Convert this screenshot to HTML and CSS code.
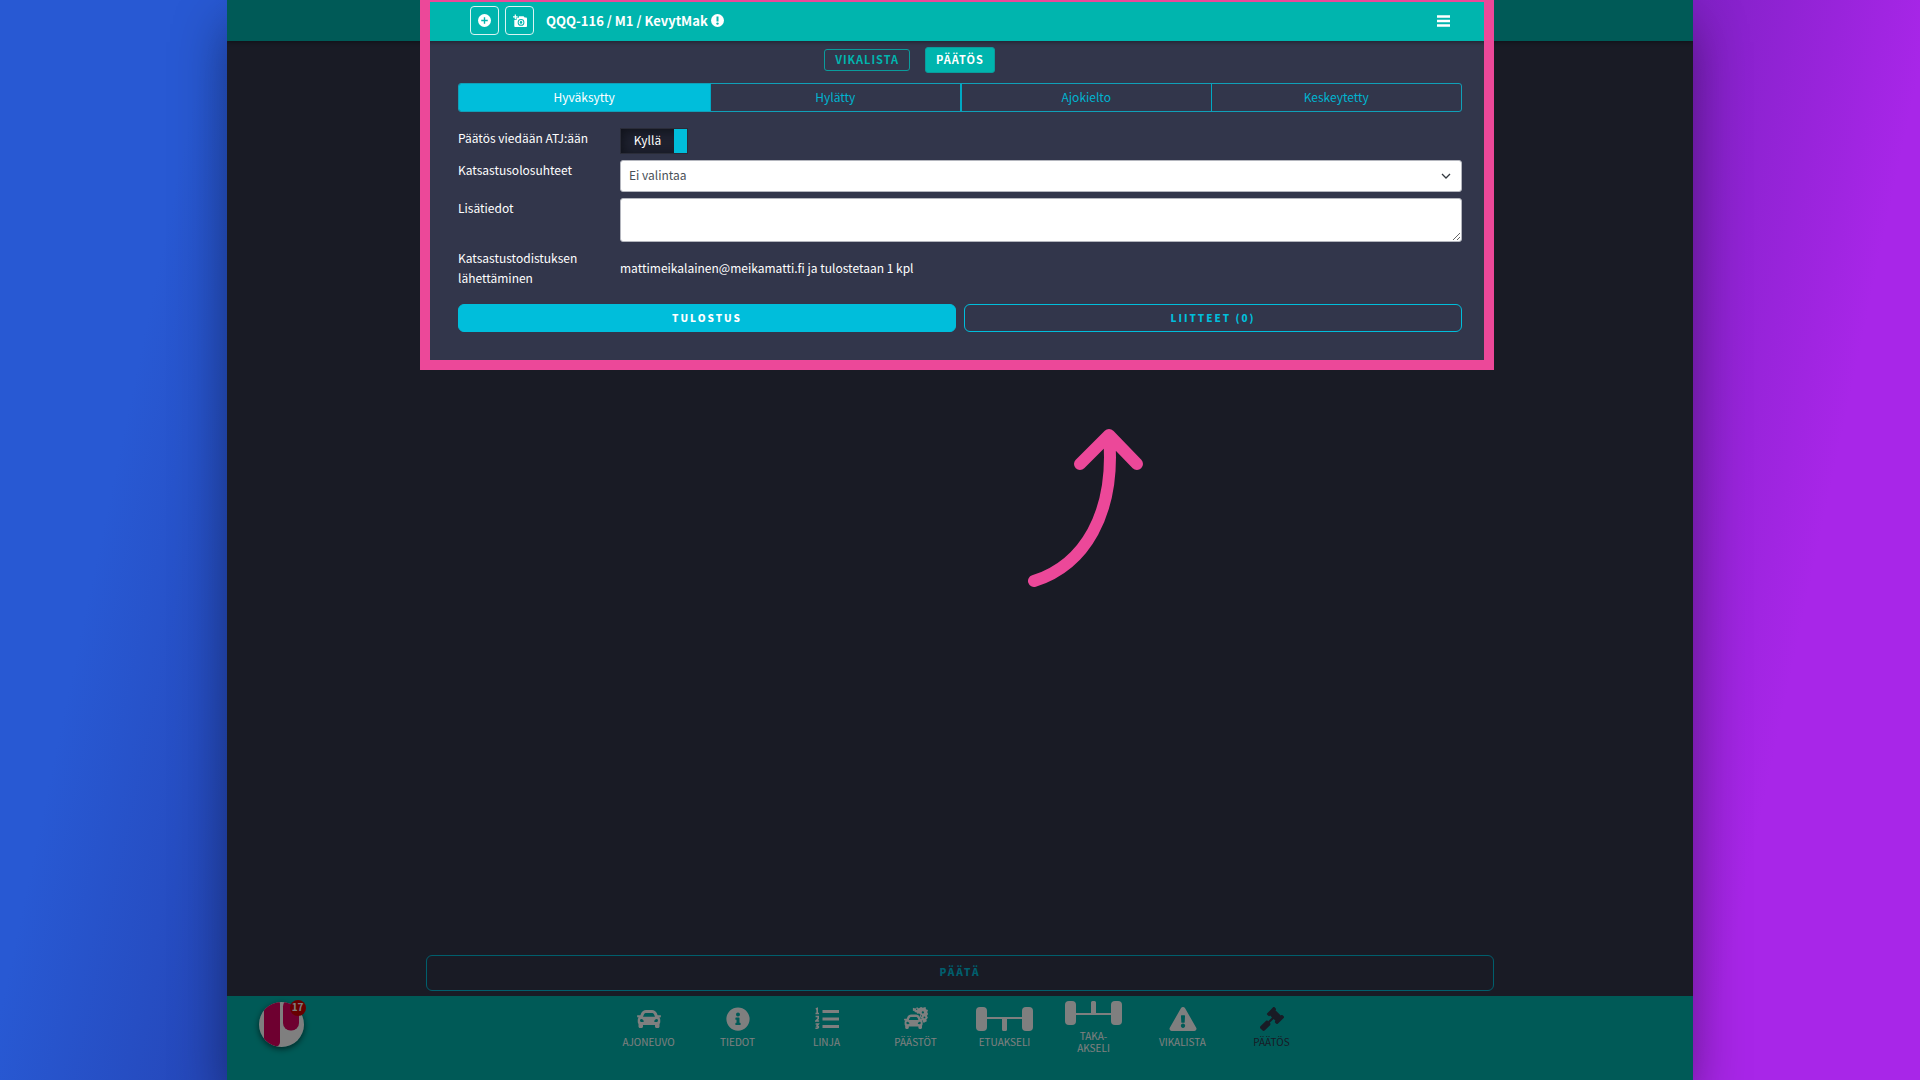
FILE: index.html
```html
<!DOCTYPE html>
<html lang="fi">
<head>
<meta charset="utf-8">
<title>QQQ-116 – Päätös</title>
<link rel="stylesheet" href="styles.css">
</head>
<body>
<div class="window">
  <header class="topbar">
    <div class="container topbar-row">
      <button class="icon-button" type="button" aria-label="Lisää">
        <svg width="13" height="13" viewBox="0 0 14 14"><circle cx="7" cy="7" r="7" fill="#fff"/><path d="M7 3.5v7M3.5 7h7" stroke="#00b5ae" stroke-width="1.5"/></svg>
      </button>
      <button class="icon-button" type="button" aria-label="Ota kuva">
        <svg width="14" height="14" viewBox="0 0 15 14"><path d="M2.500 0v5M0 2.500h5" stroke="#fff" stroke-width="1.300"/><path fill="#fff" fill-rule="evenodd" d="M6.300 2.600V2h5l1.200 1.300h1.300c.7 0 1.200.5 1.200 1.200v7.800c0 .7-.5 1.200-1.200 1.200H2.600c-.7 0-1.200-.5-1.200-1.200V5.900h2.400V3.600h2.500zM8.600 4.900a3.600 3.600 0 1 0 0 7.200 3.600 3.600 0 0 0 0-7.200zm0 1a2.600 2.600 0 1 1 0 5.200 2.600 2.600 0 0 1 0-5.200zm0 1.200a1.400 1.400 0 1 0 0 2.800 1.400 1.400 0 0 0 0-2.800z"/></svg>
      </button>
      <h1 class="vehicle">QQQ-116 / M1 / KevytMak
        <svg width="13" height="13" viewBox="0 0 13 13"><circle cx="6.500" cy="6.500" r="6.500" fill="#fff"/><path d="M6.500 2.500v5" stroke="#00b5ae" stroke-width="2"/><circle cx="6.500" cy="9.600" r="1.200" fill="#00b5ae"/></svg>
      </h1>
      <button class="menu-button" type="button" aria-label="Valikko">
        <svg width="13" height="12" viewBox="0 0 13 12"><path d="M0 1.500h13M0 6h13M0 10.500h13" stroke="#fff" stroke-width="2.400"/></svg>
      </button>
    </div>
  </header>

  <main class="container content">
    <div class="decision">
      <nav class="views">
        <button class="view" type="button">VIKALISTA</button>
        <button class="view view-active" type="button">PÄÄTÖS</button>
      </nav>

      <div class="results">
        <button class="result result-active" type="button">Hyväksytty</button>
        <button class="result" type="button">Hylätty</button>
        <button class="result result-heavy" type="button">Ajokielto</button>
        <button class="result" type="button">Keskeytetty</button>
      </div>

      <form class="form">
        <label class="label" for="atj">Päätös viedään ATJ:ään</label>
        <div class="toggle">
          <input class="toggle-input" type="checkbox" id="atj" checked>
          <span class="toggle-text">Kyllä</span>
          <span class="toggle-knob"></span>
        </div>

        <label class="label" for="conditions">Katsastusolosuhteet</label>
        <div class="select-wrap">
          <select class="field select" id="conditions"><option>Ei valintaa</option></select>
          <svg class="chevron" width="10" height="6" viewBox="0 0 10 6"><path d="M1 1l4 4 4-4" fill="none" stroke="#343a40" stroke-width="1.300"/></svg>
        </div>

        <label class="label" for="notes">Lisätiedot</label>
        <textarea class="field notes" id="notes"></textarea>

        <span class="label">Katsastustodistuksen lähettäminen</span>
        <p class="delivery">mattimeikalainen@meikamatti.fi ja tulostetaan 1 kpl</p>
      </form>

      <div class="actions">
        <button class="action action-primary" type="button">TULOSTUS</button>
        <button class="action" type="button">LIITTEET (0)</button>
      </div>
    </div>
    <button class="action finish" type="button">PÄÄTÄ</button>
  </main>

  <footer class="bottombar">
    <a class="logo" href="#" aria-label="Ilmoitukset">
      <svg class="logo-disc" width="45" height="45" viewBox="0 0 45 45"><defs><clipPath id="disc"><circle cx="22.500" cy="22.500" r="22.500"/></clipPath></defs><g clip-path="url(#disc)"><path fill="#fff" d="M0 0h45v45H0z"/><rect x="5" y="-3" width="16" height="48" rx="5" fill="#dc0060"/><rect x="24" y="-3" width="16" height="31.500" rx="7.500" fill="#dc0060"/></g></svg>
      <span class="badge">17</span>
    </a>
    <nav class="tabs">
      <a class="tab" href="#">
        <svg width="24" height="24" viewBox="0 0 512 512"><path id="car" fill="currentColor" d="M499.990 176h-59.870l-16.640-41.600C406.380 91.630 365.570 64 319.500 64h-127c-46.060 0-86.880 27.630-103.990 70.400L71.870 176H12.010C4.200 176-1.530 183.340.37 190.910l6 24C7.700 220.250 12.500 224 18.010 224h20.070C24.650 235.730 16 252.780 16 272v48c0 16.120 6.160 30.670 16 41.930V416c0 17.670 14.330 32 32 32h32c17.670 0 32-14.330 32-32v-32h256v32c0 17.670 14.330 32 32 32h32c17.670 0 32-14.330 32-32v-54.070c9.840-11.250 16-25.800 16-41.930v-48c0-19.220-8.650-36.270-22.070-48H494c5.510 0 10.310-3.750 11.640-9.090l6-24c1.890-7.570-3.840-14.910-11.650-14.910zm-352.060-17.830c7.290-18.220 24.940-30.170 44.570-30.170h127c19.630 0 37.280 11.950 44.570 30.170L384 208H128l19.930-49.830zM96 319.800c-19.200 0-32-12.760-32-31.900S76.800 256 96 256s48 28.710 48 47.850-28.800 15.950-48 15.950zm320 0c-19.200 0-48 3.190-48-15.950S396.800 256 416 256s32 12.760 32 31.900-12.800 31.900-32 31.900z"/></svg>
        AJONEUVO
      </a>
      <a class="tab" href="#">
        <svg width="24" height="24" viewBox="0 0 512 512"><path fill="currentColor" d="M256 8C119.040 8 8 119.080 8 256c0 137 111.040 248 248 248s248-111 248-248C504 119.080 392.960 8 256 8zm0 110c23.200 0 42 18.800 42 42s-18.800 42-42 42-42-18.800-42-42 18.800-42 42-42zm56 254c0 6.630-5.370 12-12 12h-88c-6.630 0-12-5.370-12-12v-24c0-6.630 5.370-12 12-12h12v-64h-12c-6.630 0-12-5.370-12-12v-24c0-6.630 5.370-12 12-12h64c6.630 0 12 5.370 12 12v100h12c6.630 0 12 5.370 12 12v24z"/></svg>
        TIEDOT
      </a>
      <a class="tab" href="#">
        <svg width="24" height="24" viewBox="0 0 24 24" fill="none" stroke="currentColor"><path d="M7.500 4.500H24M7.500 12H24M7.500 19.500H24" stroke-width="3"/><path d="M.8 2l1.400-.5V6M.5 6.500h3.500M.6 9.500h2.600v2.200L.9 14h3.200M.6 17h2.700l-1.300 2c2.400 0 1.600 2.800-1.500 2.100" stroke-width="1.600"/></svg>
        LINJA
      </a>
      <a class="tab" href="#">
        <svg width="24" height="24" viewBox="0 0 512 512"><use href="#car" transform="translate(0 110) scale(.8)"/><path fill="currentColor" d="M190 14l50 20 40-30 36 30 46-36 38 20 60-18 8 50 44 14-16 50 20 38-28 32 22 44-34 36 12 42-46 20-18 14-20-26-8-56-36-20-26-42 18-34-30-24-38 6-20-32-30 0-16-32-28 6z"/><g fill="#00b5ae"><circle cx="402" cy="116" r="24"/><circle cx="436" cy="222" r="20"/><circle cx="270" cy="48" r="14"/><circle cx="372" cy="190" r="14"/></g></svg>
        PÄÄSTÖT
      </a>
      <a class="tab" href="#">
        <svg width="57" height="24" viewBox="0 0 57 24" fill="currentColor"><rect width="11" height="24" rx="4"/><rect x="46" width="11" height="24" rx="4"/><path d="M11 10h35v2H31v10.500a1.500 1.500 0 0 1-1.500 1.500h-2a1.500 1.500 0 0 1-1.500-1.500V12H11z"/></svg>
        ETUAKSELI
      </a>
      <a class="tab" href="#">
        <svg width="57" height="24" viewBox="0 0 57 24" fill="currentColor"><rect width="11" height="24" rx="4"/><rect x="46" width="11" height="24" rx="4"/><path d="M11 14h35v-2H31V1.500A1.500 1.500 0 0 0 29.500 0h-2A1.500 1.500 0 0 0 26 1.500V12H11z"/></svg>
        TAKA-<br>AKSELI
      </a>
      <a class="tab" href="#">
        <svg width="28" height="24" viewBox="0 0 576 512"><path fill="currentColor" d="M569.517 440.013C587.975 472.007 564.806 512 527.940 512H48.054c-36.937 0-59.999-40.055-41.577-71.987L246.423 23.985c18.467-32.009 64.720-31.951 83.154 0l239.940 416.028zM288 354c-25.405 0-46 20.595-46 46s20.595 46 46 46 46-20.595 46-46-20.595-46-46-46zm-43.673-165.346l7.418 136c.347 6.364 5.609 11.346 11.982 11.346h48.546c6.373 0 11.635-4.982 11.982-11.346l7.418-136c.375-6.874-5.098-12.654-11.982-12.654h-63.383c-6.884 0-12.356 5.780-11.981 12.654z"/></svg>
        VIKALISTA
      </a>
      <a class="tab tab-active" href="#">
        <svg width="24" height="24" viewBox="0 0 512 512"><path fill="currentColor" d="M504.971 199.362l-22.627-22.627c-9.373-9.373-24.569-9.373-33.941 0l-5.657 5.657L329.608 69.255l5.657-5.657c9.373-9.373 9.373-24.569 0-33.941L312.638 7.029c-9.373-9.373-24.569-9.373-33.941 0L154.246 131.480c-9.373 9.373-9.373 24.569 0 33.941l22.627 22.627c9.373 9.373 24.569 9.373 33.941 0l5.657-5.657 39.598 39.598-81.040 81.040-5.657-5.657c-12.497-12.497-32.758-12.497-45.255 0L9.373 412.118c-12.497 12.497-12.497 32.758 0 45.255l45.255 45.255c12.497 12.497 32.758 12.497 45.255 0l114.745-114.745c12.497-12.497 12.497-32.758 0-45.255l-5.657-5.657 81.040-81.040 39.598 39.598-5.657 5.657c-9.373 9.373-9.373 24.569 0 33.941l22.627 22.627c9.373 9.373 24.569 9.373 33.941 0l124.451-124.451c9.372-9.372 9.372-24.568 0-33.941z"/></svg>
        PÄÄTÖS
      </a>
    </nav>
  </footer>

  <div class="spotlight"></div>
  <svg class="arrow" viewBox="26 26 142 162" fill="none" stroke="#ec4899" stroke-width="12" stroke-linecap="round" stroke-linejoin="round"><path d="M54 181C104 165 136 114 129 36M100 64l29-29 28 29"/></svg>
</div>
</body>
</html>
```
FILE: styles.css
```css
* {
  box-sizing: border-box;
}

body {
  margin: 0;
  background: linear-gradient(102deg, #2859d3 10%, #1c1470 50%, #a826e8 90%);
  color: #fff;
  font-family: "Noto Sans CJK SC", "Open Sans", sans-serif;
  font-size: 12px;
  line-height: 20px;
}

button,
select,
textarea {
  font: inherit;
}

.window {
  position: relative;
  display: flex;
  flex-direction: column;
  width: 76.4%;
  min-height: 100vh;
  margin: 0 auto;
  overflow: hidden;
  background: #32364b;
  box-shadow: 0 24px 50px rgba(0, 0, 0, 0.4);
}

.container {
  width: 100%;
  max-width: 1068px;
  margin: 0 auto;
}

/* Top bar */

.topbar {
  background: #00b5ae;
  box-shadow: 0 1px 4px rgba(0, 0, 0, 0.4);
}

.topbar-row {
  display: flex;
  align-items: center;
  gap: 6px;
  height: 41px;
  padding: 0 44px;
}

.icon-button {
  display: grid;
  place-items: center;
  width: 29px;
  height: 29px;
  padding: 0;
  border: 1px solid #d9f4f3;
  border-radius: 4px;
  background: none;
}

.vehicle {
  display: flex;
  align-items: center;
  gap: 3px;
  margin: 0 0 0 6px;
  font-size: 13px;
  font-weight: 700;
}

.menu-button {
  display: grid;
  margin-left: auto;
  padding: 0;
  border: 0;
  background: none;
}

/* Decision form */

.content {
  display: flex;
  flex: 1;
  flex-direction: column;
  justify-content: space-between;
  padding-bottom: 5px;
}

.decision {
  padding: 6px 32px 0;
}

.views {
  display: flex;
  align-items: center;
  justify-content: center;
  gap: 15px;
  height: 26px;
  padding-right: 101px;
}

.view {
  height: 22px;
  padding: 0 10px 2px;
  border: 1px solid #0a9c9c;
  border-radius: 3px;
  background: none;
  color: #00b5ae;
  font-size: 11px;
  font-weight: 700;
  line-height: 18px;
  letter-spacing: 1px;
}

.view-active {
  height: 26px;
  background: #00b5ae;
  color: #fff;
}

.results {
  display: grid;
  grid-template-columns: repeat(4, 1fr);
  margin-top: 10px;
  overflow: hidden;
  border: 1px solid #10a0b8;
  border-radius: 3px;
}

.result {
  height: 27px;
  padding: 0 0 2px;
  border: 0;
  border-left: 1px solid #00a9c4;
  background: none;
  color: #00b4d0;
}

.result-active {
  border-left: 0;
  background: #00bedb;
  color: #fff;
}

.result-heavy {
  border-left-width: 2px;
}

.form {
  display: grid;
  grid-template-columns: 162px 1fr;
  row-gap: 6px;
  margin-top: 16px;
}

.toggle {
  position: relative;
  display: flex;
  justify-self: start;
  width: 68px;
  height: 26px;
  border: 1px solid #2a2c38;
  background: #1f2230;
  box-shadow: inset 2px 2px 12px #10121a;
}

.toggle-input {
  position: absolute;
  inset: 0;
  width: 100%;
  height: 100%;
  margin: 0;
  opacity: 0;
}

.toggle-text {
  flex: 1;
  line-height: 22px;
  text-align: center;
}

.toggle-knob {
  width: 13px;
  background: #00bedb;
}

.field {
  display: block;
  width: 100%;
  border: 1px solid #b4b6be;
  border-radius: 3px;
  background: #fff;
  color: #495057;
}

.select-wrap {
  position: relative;
}

.select {
  height: 32px;
  padding: 0 8px 2px;
  appearance: none;
}

.chevron {
  position: absolute;
  top: 13px;
  right: 11px;
  pointer-events: none;
}

.notes {
  height: 44px;
}

.delivery {
  margin: 0;
  align-self: center;
}

.actions {
  display: grid;
  grid-template-columns: 1fr 1fr;
  gap: 8px;
  margin-top: 16px;
}

.action {
  height: 28px;
  padding: 0;
  border: 1px solid #00bedb;
  border-radius: 6px;
  background: none;
  color: #00bedb;
  font-size: 10px;
  font-weight: 900;
  letter-spacing: 2px;
}

.action-primary {
  background: #00bedb;
  color: #fff;
}

.finish {
  height: 36px;
  padding-bottom: 2px;
}

/* Bottom bar */

.bottombar {
  display: grid;
  grid-template-columns: 1fr auto 1fr;
  align-items: start;
  height: 84px;
  background: #00b5ae;
}

.logo {
  position: relative;
  width: 45px;
  height: 45px;
  margin: 6px 0 0 32px;
  border-radius: 50%;
  box-shadow: 0 2px 6px rgba(0, 0, 0, 0.6);
}

.logo-disc {
  display: block;
}

.badge {
  position: absolute;
  top: -2px;
  right: -2px;
  width: 16px;
  height: 16px;
  border-radius: 50%;
  background: #d00000;
  color: #fff;
  font-size: 10px;
  font-weight: 700;
  line-height: 14px;
  text-align: center;
}

.tabs {
  display: flex;
  height: 63px;
}

.tab {
  display: flex;
  flex-direction: column;
  align-items: center;
  justify-content: center;
  width: 89px;
  color: #fff;
  font-size: 10px;
  line-height: 12px;
  text-align: center;
  text-decoration: none;
}

.tab svg {
  margin-bottom: 5px;
}

.tab-active {
  color: #32364b;
}

/* Tour overlay: frames the form and dims everything around it */

.spotlight {
  position: absolute;
  top: -8px;
  left: calc(50% - 540px);
  width: 1074px;
  height: 378px;
  border: 10px solid #ec4899;
  box-shadow: 0 0 0 2000px rgba(0, 0, 0, 0.5);
  pointer-events: none;
}

.arrow {
  position: absolute;
  top: 426px;
  left: calc(50% + 46px);
  width: 142px;
  height: 162px;
  pointer-events: none;
}
```
